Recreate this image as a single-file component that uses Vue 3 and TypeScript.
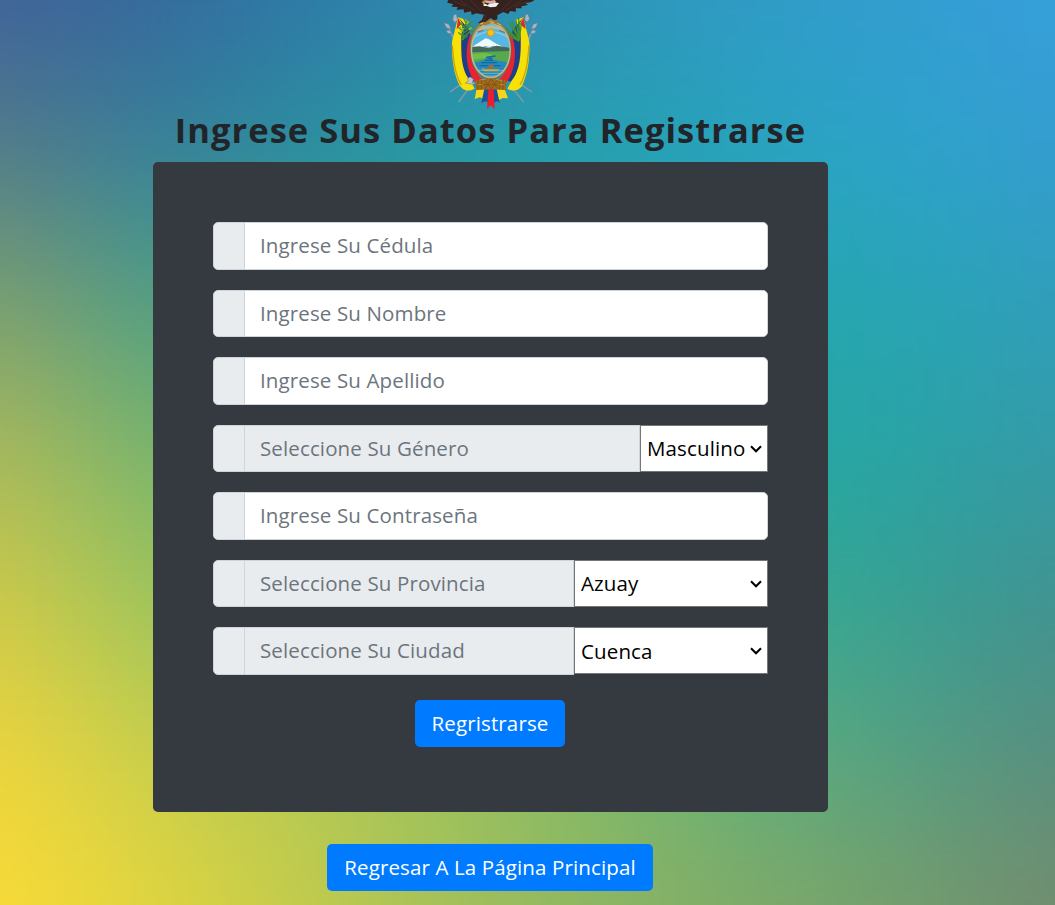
<script setup lang="ts">
import { ref } from 'vue'

interface Field {
  label: string
  value: string
  options?: string[]
  size?: 'short' | 'long'
  type?: string
}

const fields = ref<Field[]>([
  { label: 'Ingrese Su Cédula', value: '' },
  { label: 'Ingrese Su Nombre', value: '' },
  { label: 'Ingrese Su Apellido', value: '' },
  { label: 'Seleccione Su Género', value: 'Masculino', options: ['Masculino', 'Femenino'], size: 'short' },
  { label: 'Ingrese Su Contraseña', value: '', type: 'password' },
  { label: 'Seleccione Su Provincia', value: 'Azuay', options: ['Azuay'], size: 'long' },
  { label: 'Seleccione Su Ciudad', value: 'Cuenca', options: ['Cuenca'], size: 'long' },
])

// Colour mesh for the backdrop, one swatch every 150 units, softened by a blur.
const mesh: string[][] = [
  ['#40629b', '#36689c', '#2f79a8', '#2e88b0', '#2f94b8', '#309bc6', '#329dd0', '#379fdb'],
  ['#547c88', '#37809a', '#298f9f', '#269ba5', '#25a1b0', '#28a3be', '#2da3ca', '#349dd0'],
  ['#7c9f70', '#529d84', '#45a08a', '#30a19a', '#25a5a5', '#24a7ac', '#27a5b4', '#309ebb'],
  ['#abb95a', '#79b56c', '#65b075', '#50aa80', '#35a890', '#24a8a2', '#28a4a5', '#359ba8'],
  ['#cfca48', '#9fc55c', '#8abf62', '#75b66c', '#5cb07a', '#36ab8e', '#36a095', '#409290'],
  ['#eed43d', '#c9cf4b', '#b2c855', '#9bc35d', '#80b96a', '#5cb07c', '#549f83', '#578f80'],
  ['#fadb36', '#e2d53f', '#c4cc4b', '#a4c05a', '#8db562', '#80aa68', '#759f6c', '#728c6e'],
]
const swatches = Array.from({ length: 11 }, (_, r) => r - 2).flatMap((r) =>
  Array.from({ length: 12 }, (_, c) => c - 2).map((c) => ({
    x: c * 150 - 75,
    y: r * 150 - 75,
    fill: mesh[Math.max(0, Math.min(6, r))][Math.max(0, Math.min(7, c))],
  })),
)
</script>

<template>
  <div class="page">
    <svg class="backdrop" viewBox="0 0 1055 905" preserveAspectRatio="none" aria-hidden="true">
      <defs>
        <filter id="soften" filterUnits="userSpaceOnUse" x="-400" y="-400" width="1900" height="1750" color-interpolation-filters="sRGB">
          <feGaussianBlur stdDeviation="70" />
        </filter>
      </defs>
      <g filter="url(#soften)">
        <rect v-for="(s, i) in swatches" :key="i" :x="s.x" :y="s.y" width="151" height="151" :fill="s.fill" />
      </g>
    </svg>

    <main class="content">
      <svg class="crest" viewBox="0 0 330 336" aria-hidden="true">
        <!-- lances -->
        <g stroke="#8799a5" stroke-width="4" fill="none">
          <path d="M34 76 54 120M297 76 278 120M45 96 60 130M286 98 270 130M82 248 42 276M247 248 288 276M98 265 68 306M230 265 263 306" />
        </g>
        <g fill="#a9b5c2" stroke="#647a96" stroke-width="2">
          <path d="M23 68 38 72 46 88 32 84ZM53 44 61 42 65 60 56 68 50 58ZM30 92 43 90 47 102 35 100ZM306 68 292 72 285 87 299 84ZM276 42 268 44 266 61 274 66 281 57ZM301 92 287 90 284 102 296 100Z" />
        </g>
        <!-- flags -->
        <path d="M66 52 48 125C47 180 54 225 72 258 84 274 98 275 116 266L102 240C82 220 76 170 78 96L92 60Z" fill="#f7df08" />
        <path d="M262 52 280 125C282 180 274 225 258 258 246 274 230 275 214 266L228 240C248 220 252 170 250 96L238 60Z" fill="#f7df08" />
        <path d="M67 52 80 72 76 112C74 182 80 218 106 245L120 240 100 90Z" fill="#1d3f87" />
        <path d="M262 52 250 72 254 112C256 182 248 218 224 245L210 240 230 90Z" fill="#1d3f87" />
        <path d="M104 102C85 142 88 208 118 248L145 241C113 220 98 168 110 110Z" fill="#e92332" />
        <path d="M225 102C244 142 241 208 211 248L184 241C216 220 231 168 219 110Z" fill="#e92332" />
        <path d="M66 53 76 72 62 88ZM263 53 252 72 269 88Z" fill="#db2737" />
        <path d="M49 136C53 190 58 225 76 255M279 136C275 190 270 225 252 255" stroke="#c9a50b" stroke-width="4" fill="none" />
        <!-- laurel and palm -->
        <g stroke="#42912d" stroke-width="4" fill="none" stroke-linecap="round">
          <path d="M82 119C78 95 84 78 98 58M81 109 68 98M83 96 67 82M87 86 74 69M94 74 84 58M83 109 104 94M86 97 112 77M90 87 108 65M78 118 94 108M98 97 116 91" />
          <path d="M250 120 219 66M250 120 228 65M250 120 240 61M250 119 248 55M250 118 256 70M248 120 210 83M248 122 217 97M248 123 222 109" />
        </g>
        <path d="M76 96 82 84M92 72 98 63M99 88 107 83M70 84 76 81" stroke="#a7b92b" stroke-width="5" />
        <!-- ribbon -->
        <path d="M123 260 116 297 132 292 147 300 157 263Z" fill="#f5d718" />
        <path d="M177 262 188 301 200 294 216 295 203 260Z" fill="#f5d718" />
        <path d="M146 262 136 309 150 303 157 310 164 267 172 309 184 303 191 309 181 262Z" fill="#1d4f9c" />
        <path d="M158 259 153 327 164 316 176 328 172 259Z" fill="#ef1d2c" />
        <!-- shield -->
        <path d="M165 61C122 64 101 98 102 147 103 202 129 236 165 238 202 235 225 202 226 147 225 98 204 65 165 61Z" fill="#9a8d54" stroke="#52674c" stroke-width="2" />
        <clipPath id="oval"><ellipse cx="164.500" cy="151" rx="57" ry="80" /></clipPath>
        <g clip-path="url(#oval)">
          <path d="M105 65H225V150H105Z" fill="#55b7e3" />
          <path d="M108 100Q165 62 222 100" fill="none" stroke="#b7b998" stroke-width="11" />
          <path d="M113 112Q165 78 218 113" fill="none" stroke="#83cae9" stroke-width="5" />
          <path d="M105 141 125 131 147 119 157 120 167 127 183 132 207 140 225 142V157H105Z" fill="#8ab8ca" />
          <path d="M109 140 130 127 149 115 159 118 171 125 181 131 200 140 170 137 160 141 148 137 132 143Z" fill="#f4fafb" />
          <path d="M105 141 130 139 158 145 181 137 225 144V165H105Z" fill="#416858" />
          <path d="M105 157 225 153V194H105Z" fill="#56aa4d" />
          <path d="M105 163 145 159 174 164 153 173 105 180Z" fill="#73bd4b" />
          <path d="M105 190 145 181 153 171 175 166 161 176 181 181 211 186 225 196V236H105Z" fill="#2589bd" />
          <path d="M146 181H171M136 188H183M130 197H193M150 172 179 168M158 176H170" stroke="#116b9f" stroke-width="4" />
          <path d="M111 211H145M183 212H215M123 220H204M145 228H190" stroke="#65b8c2" stroke-width="3" />
          <path d="M136 203 147 208H190L184 214H145Z" fill="#d5a849" />
          <path d="M154 207 158 195 174 193 171 207Z" fill="#936e48" />
        </g>
        <ellipse cx="164.500" cy="151" rx="58" ry="81" fill="none" stroke="#c1bba0" stroke-width="4" />
        <g stroke="#d9a52a" stroke-width="3"><path d="M164 84V112M150 98H178M154 88 174 108M174 88 154 108" /></g>
        <circle cx="164" cy="98" r="10" fill="#f3c51a" stroke="#c89127" stroke-width="2" />
        <path d="M125 96 142 91M189 91 207 98" stroke="#777c6b" stroke-width="4" />
        <!-- fasces -->
        <path d="M119 240 166 235 209 240 210 270 165 268 120 270Z" fill="#a06a1c" />
        <path d="M126 238V269M136 239V269M190 239V269M201 239V269M119 254 210 254M145 240 166 267M165 236 185 266M166 237 146 268M184 240 166 267" stroke="#7a5012" stroke-width="2.500" />
        <path d="M131 240 150 237M180 238 199 243M124 254H140M187 254H206" stroke="#c8953a" stroke-width="2.500" />
        <path d="M111 253 88 249 98 243 94 236 103 231 112 238 109 248H120Z" fill="#c2c8ce" stroke="#7c8794" stroke-width="2" />
        <!-- condor -->
        <path d="M36 0H296L284 7 268 9 276 15 255 19 258 25 239 25 240 35 222 33 217 42 202 36 184 46 184 58 174 61 164 54 151 64 151 75 142 73 132 78 134 69 125 70 138 59 144 44 121 40 107 45 105 34 84 38 83 28 62 29 65 21 46 20 52 13 34 8Z" fill="#35211d" />
        <path d="M55 4 91 19M73 1 116 32M104 1 135 34M273 4 235 21M257 1 208 32M228 1 192 34M150 43 143 62" stroke="#553a30" stroke-width="2" fill="none" />
        <path d="M142 9 155 15 166 7 189 9 180 20 164 22 153 18 143 18Z" fill="#f1eeee" />
        <path d="M144 0 162 2 176 0 181 7 167 12 150 8Z" fill="#d9aba3" />
        <path d="M144 1 137 6 142 12 150 8Z" fill="#bb8c3a" />
        <path d="M125 77 137 66 151 65 163 58 183 65 203 77 185 75 169 69 151 74Z" fill="#a87931" />
        <path d="M132 72 141 70M161 65 174 67M184 70 195 75" stroke="#e2b35d" stroke-width="3" />
      </svg>

      <h1 class="title">Ingrese Sus Datos Para Registrarse</h1>

      <form class="card" @submit.prevent>
        <div v-for="f in fields" :key="f.label" class="group">
          <span class="prepend"></span>
          <input v-if="!f.options" v-model="f.value" class="control" :type="f.type ?? 'text'" :placeholder="f.label" />
          <template v-else>
            <input class="control" type="text" :placeholder="f.label" disabled />
            <div class="picker" :class="f.size">
              <select v-model="f.value" :aria-label="f.label">
                <option v-for="o in f.options" :key="o">{{ o }}</option>
              </select>
              <svg class="chevron" viewBox="0 0 12 8" aria-hidden="true"><path d="M1 1.300 6 6.300 11 1.300" /></svg>
            </div>
          </template>
        </div>
        <button class="btn submit" type="submit">Regristrarse</button>
      </form>

      <button class="btn back" type="button">Regresar A La Página Principal</button>
    </main>
  </div>
</template>

<style>
body {
  margin: 0;
  overflow: hidden;
}
</style>

<style scoped>
.page {
  position: relative;
  height: 905px;
  overflow: hidden;
  font-family: 'Open Sans', 'Noto Sans', sans-serif;
  font-size: 20.5px;
  letter-spacing: 0.13px;
}
.backdrop {
  position: absolute;
  inset: 0;
  width: 100%;
  height: 100%;
}
.content {
  position: relative;
  width: 675px;
  margin-left: 153px;
  display: flex;
  flex-direction: column;
  align-items: center;
}
.crest {
  display: block;
  width: 110px;
  height: 112px;
}
.title {
  margin: -3px 0 11px;
  height: 42px;
  line-height: 42px;
  font-size: 34.5px;
  font-weight: 700;
  letter-spacing: 1.05px;
  white-space: nowrap;
  color: #212529;
}
.card {
  box-sizing: border-box;
  width: 675px;
  height: 650px;
  padding: 60px;
  border-radius: 5px;
  background: #343a40;
  display: flex;
  flex-direction: column;
}
.group {
  display: flex;
  height: 47.5px;
  margin-bottom: 20px;
}
.prepend {
  box-sizing: border-box;
  flex: none;
  width: 32px;
  border: 1px solid #ced4da;
  border-radius: 5px 0 0 5px;
  background: #e9ecef;
}
.control {
  box-sizing: border-box;
  flex: 1;
  min-width: 0;
  height: 100%;
  margin: 0 0 0 -1px;
  padding: 0 15px 1px;
  border: 1px solid #ced4da;
  border-radius: 0 5px 5px 0;
  background: #fff;
  font: inherit;
  letter-spacing: inherit;
  color: #495057;
  outline: none;
}
.control:disabled {
  border-radius: 0;
  background: #e9ecef;
}
.control::placeholder {
  color: #6c757d;
  opacity: 1;
}
.picker {
  display: grid;
  flex: none;
  align-items: center;
}
.short {
  width: 128px;
}
.long {
  width: 194px;
}
select {
  grid-area: 1 / 1;
  box-sizing: border-box;
  width: 100%;
  height: 47px;
  margin: 0;
  padding: 0 5px 0 6px;
  appearance: none;
  border: 1px solid #767676;
  border-radius: 0;
  background: #fff;
  font: inherit;
  letter-spacing: inherit;
  color: #000;
}
.chevron {
  grid-area: 1 / 1;
  justify-self: end;
  width: 12px;
  height: 8px;
  margin: 1px 6px 0 0;
  pointer-events: none;
}
.chevron path {
  fill: none;
  stroke: #000;
  stroke-width: 2;
}
.btn {
  box-sizing: border-box;
  height: 47px;
  padding: 0 0 1px;
  border: 0;
  border-radius: 5px;
  background: #007bff;
  color: #fff;
  font: inherit;
  letter-spacing: inherit;
  white-space: nowrap;
}
.submit {
  align-self: center;
  width: 150px;
  margin: 5px 1px 0 0;
}
.back {
  width: 326px;
  margin: 32px 1px 0 0;
}
</style>
